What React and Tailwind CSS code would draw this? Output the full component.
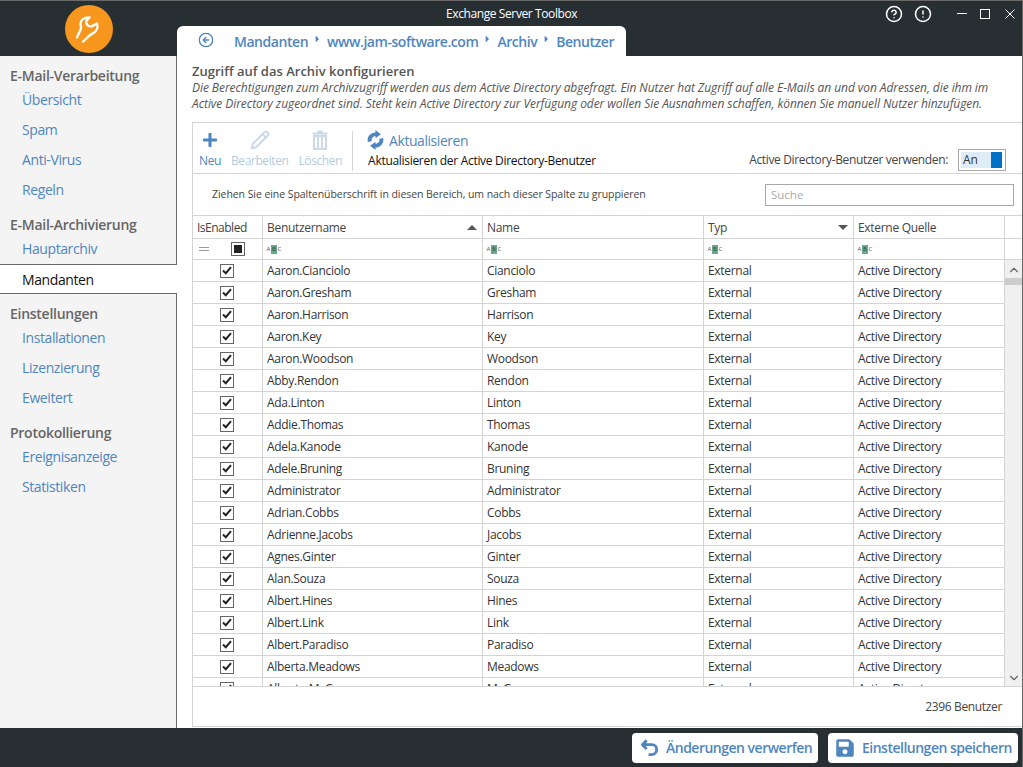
import React from "react";
import { CircleArrowLeft, CircleHelp, CircleAlert, ChevronUp, ChevronDown, Pencil } from "lucide-react";
import { FaSave, FaPlus, FaCaretRight } from "react-icons/fa";

const names = [
  ["Aaron.Cianciolo", "Cianciolo"],
  ["Aaron.Gresham", "Gresham"],
  ["Aaron.Harrison", "Harrison"],
  ["Aaron.Key", "Key"],
  ["Aaron.Woodson", "Woodson"],
  ["Abby.Rendon", "Rendon"],
  ["Ada.Linton", "Linton"],
  ["Addie.Thomas", "Thomas"],
  ["Adela.Kanode", "Kanode"],
  ["Adele.Bruning", "Bruning"],
  ["Administrator", "Administrator"],
  ["Adrian.Cobbs", "Cobbs"],
  ["Adrienne.Jacobs", "Jacobs"],
  ["Agnes.Ginter", "Ginter"],
  ["Alan.Souza", "Souza"],
  ["Albert.Hines", "Hines"],
  ["Albert.Link", "Link"],
  ["Albert.Paradiso", "Paradiso"],
  ["Alberta.Meadows", "Meadows"],
  ["Alberto.McGee", "McGee"],
];

const SideHeading = ({ children, className = "" }) => (
  <div className={`h-[18px] pl-[10px] pb-[2px] flex items-center text-[14px] font-semibold text-[#666] tracking-[-0.27px] ${className}`}>{children}</div>
);

const SideItem = ({ children }) => (
  <div className="h-[30px] pl-[22px] pb-[2px] flex items-center text-[14px] text-[#4f86c0] tracking-[-0.4px]">{children}</div>
);

const AbcIcon = () => (
  <span className="flex items-center h-[10px] text-[6px] leading-none text-[#555]">
    <span className="w-[5px] text-center">A</span>
    <span className="w-[6px] h-[9px] bg-[#6aa88e] text-[#1f4a3a] text-center leading-[9px]">B</span>
    <span className="w-[5px] text-center">C</span>
  </span>
);

const CheckBox = () => (
  <span className="w-[14px] h-[14px] mr-[1px] border border-[#666] bg-white flex items-center justify-center">
    <svg width="10" height="9" viewBox="0 0 10 9">
      <path d="M1 4.5 L3.8 7.2 L9 1.2" fill="none" stroke="#222" strokeWidth="2" />
    </svg>
  </span>
);

const Crumb = ({ children }) => <span className="text-[14px] font-semibold text-[#4f86c0] tracking-[-0.45px]">{children}</span>;
const Sep = () => <FaCaretRight className="w-[9px] h-[10px] text-[#4f86c0] mx-[5px] mb-[4px]" />;

const ToolButton = ({ icon, label, muted, className = "" }) => (
  <div className={`flex flex-col items-center ${className}`}>
    <div className="h-[24px] flex items-center">{icon}</div>
    <span className={`text-[12px] leading-[18px] tracking-[-0.4px] ${muted ? "text-[#b3cbe2]" : "text-[#4f86c0]"}`}>{label}</span>
  </div>
);

const Row = ({ user, name }) => (
  <div className="h-[22px] flex shrink-0 border-b border-[#d4d4d4] text-[12px] text-[#333] tracking-[-0.3px]">
    <div className="w-[70px] flex items-center justify-center border-r border-[#d4d4d4]"><CheckBox /></div>
    <div className="w-[220px] pl-[4px] flex items-center border-r border-[#d4d4d4]">{user}</div>
    <div className="w-[221px] pl-[4px] flex items-center border-r border-[#d4d4d4]">{name}</div>
    <div className="w-[150px] pl-[4px] flex items-center border-r border-[#d4d4d4]">External</div>
    <div className="w-[151px] pl-[4px] flex items-center border-r border-[#d4d4d4]">Active Directory</div>
  </div>
);

export default function App() {
  return (
    <div className="w-[1023px] h-[767px] flex flex-col overflow-hidden bg-white border-t border-r border-[#6a6a6a]" style={{ fontFamily: '"Open Sans", "Noto Sans", sans-serif' }}>
      {/* Titelleiste */}
      <header className="h-[55px] shrink-0 flex bg-[#272f32]">
        <div className="w-[177px] shrink-0 flex justify-center pt-[4px]">
          <div className="w-[48px] h-[48px] rounded-full bg-[#f7971d]">
            <svg width="48" height="48" viewBox="12 8 144 144">
              <path d="M48 105 C52 92 62 84 60 72 C56 62 60 52 72 47 L86 45 L76 56 C74 66 82 74 92 72 L108 64 C112 76 106 88 94 94 C84 98 78 108 66 118" fill="none" stroke="#fff" strokeWidth="7" strokeLinecap="round" strokeLinejoin="round" />
            </svg>
          </div>
        </div>
        <div className="flex-1 flex flex-col">
          <div className="h-[25px] flex items-center pl-[269px] text-white text-[12px] tracking-[-0.4px]">
            <span>Exchange Server Toolbox</span>
            <div className="ml-auto flex items-center text-white">
              <CircleHelp className="w-[18px] h-[18px]" strokeWidth={2} />
              <CircleAlert className="w-[18px] h-[18px] ml-[11px]" strokeWidth={2} />
              <span className="w-[10px] h-[1.5px] bg-white ml-[25px]" />
              <span className="w-[10px] h-[10px] border border-white ml-[13px]" />
              <svg width="10" height="10" viewBox="0 0 10 10" className="ml-[15px] mr-[7px]">
                <path d="M0.5 0.5 L9.5 9.5 M9.5 0.5 L0.5 9.5" stroke="#fff" strokeWidth="1" />
              </svg>
            </div>
          </div>
          <div className="h-[30px] w-[449px] bg-white rounded-t-[6px] flex items-center pl-[21px]">
            <CircleArrowLeft className="w-[16px] h-[16px] text-[#4f86c0] mb-[2px]" />
            <div className="flex items-center ml-[20px]">
              <Crumb>Mandanten</Crumb>
              <Sep />
              <Crumb>www.jam-software.com</Crumb>
              <Sep />
              <Crumb>Archiv</Crumb>
              <Sep />
              <Crumb>Benutzer</Crumb>
            </div>
          </div>
        </div>
      </header>

      <div className="flex-1 flex min-h-0">
        {/* Seitenleiste */}
        <aside className="w-[177px] shrink-0 flex flex-col pt-[11px] bg-[#f4f4f4] border-r border-[#6a6a6a]">
          <SideHeading>E-Mail-Verarbeitung</SideHeading>
          <SideItem>Übersicht</SideItem>
          <SideItem>Spam</SideItem>
          <SideItem>Anti-Virus</SideItem>
          <SideItem>Regeln</SideItem>
          <SideHeading className="mt-[11px]">E-Mail-Archivierung</SideHeading>
          <SideItem>Hauptarchiv</SideItem>
          <div className="h-[30px] w-[177px] pl-[22px] flex items-center text-[14px] text-[#111] bg-white border-y border-[#6a6a6a] tracking-[-0.4px]">Mandanten</div>
          <SideHeading className="mt-[11px]">Einstellungen</SideHeading>
          <SideItem>Installationen</SideItem>
          <SideItem>Lizenzierung</SideItem>
          <SideItem>Eweitert</SideItem>
          <SideHeading className="mt-[11px]">Protokollierung</SideHeading>
          <SideItem>Ereignisanzeige</SideItem>
          <SideItem>Statistiken</SideItem>
        </aside>

        {/* Inhalt */}
        <main className="flex-1 min-w-0 flex flex-col pl-[15px] pt-[7px] pb-[1px]">
          <h1 className="text-[13px] leading-[17px] font-semibold text-[#555]">Zugriff auf das Archiv konfigurieren</h1>
          <p className="text-[12px] leading-[16px] italic text-[#555] whitespace-nowrap tracking-[-0.07px]">
            Die Berechtigungen zum Archivzugriff werden aus dem Active Directory abgefragt. Ein Nutzer hat Zugriff auf alle E-Mails an und von Adressen, die ihm im
            <br />
            Active Directory zugeordnet sind. Steht kein Active Directory zur Verfügung oder wollen Sie Ausnahmen schaffen, können Sie manuell Nutzer hinzufügen.
          </p>

          <div className="mt-[10px] flex-1 min-h-0 flex flex-col border border-[#d4d4d4] border-r-0">
            {/* Werkzeugleiste */}
            <div className="h-[51px] shrink-0 flex items-start border-b border-[#d4d4d4] pl-[6px] pt-[5px]">
              <ToolButton icon={<FaPlus className="w-[16px] h-[16px] text-[#4f86c0]" />} label="Neu" />
              <ToolButton className="ml-[10px]" muted icon={<Pencil className="w-[20px] h-[20px] text-[#c9d9ea]" strokeWidth={2.4} />} label="Bearbeiten" />
              <ToolButton className="ml-[10px]" muted icon={
                <svg width="16" height="20" viewBox="0 0 16 20">
                  <path d="M5.5 1.5 H10.5 M0.5 3.5 H15.5" fill="none" stroke="#c9d9ea" strokeWidth="2" />
                  <path d="M2 6 H14 V19 H2 Z" fill="none" stroke="#c9d9ea" strokeWidth="2" />
                  <path d="M6 7 V18 M10 7 V18" fill="none" stroke="#c9d9ea" strokeWidth="2" />
                </svg>
              } label="Löschen" />
              <div className="w-px h-[40px] bg-[#d4d4d4] ml-[10px] mt-[3px]" />
              <div className="ml-[15px] flex flex-col">
                <div className="h-[24px] flex items-center">
                  <svg width="17" height="20" viewBox="0 0 20 24" className="-ml-[1px]">
                    <path d="M3 14 C2 8.5 6 5 11 5 M17 10 C18 15.5 14 19 9 19" fill="none" stroke="#4f86c0" strokeWidth="4.6" />
                    <path d="M10 0 L16.5 5 L10 10 Z M10 14 L3.5 19 L10 24 Z" fill="#4f86c0" />
                  </svg>
                  <span className="ml-[5px] text-[14px] text-[#4f86c0] tracking-[-0.45px]">Aktualisieren</span>
                </div>
                <span className="text-[12px] leading-[18px] text-[#111] tracking-[-0.3px]">Aktualisieren der Active Directory-Benutzer</span>
              </div>
              <div className="ml-auto flex items-center mt-[21px] mr-[16px]">
                <span className="text-[12px] text-[#444] tracking-[-0.35px]">Active Directory-Benutzer verwenden:</span>
                <div className="ml-[10px] w-[48px] h-[22px] border border-[#a8a8a8] p-[2px] flex bg-white">
                  <div className="flex-1 bg-[#deecf7] text-[12px] text-[#333] pl-[2px] leading-[16px]">An</div>
                  <div className="w-[11px] bg-[#0072c6] mr-[1px]" />
                </div>
              </div>
            </div>

            {/* Gruppierung */}
            <div className="h-[42px] shrink-0 flex items-center pl-[19px] pr-[8px] border-b border-[#d4d4d4]">
              <span className="text-[10.5px] text-[#444] tracking-[-0.06px]">Ziehen Sie eine Spaltenüberschrift in diesen Bereich, um nach dieser Spalte zu gruppieren</span>
              <div className="ml-auto w-[249px] h-[22px] border border-[#a8a8a8] pl-[5px] pt-[1px] flex items-center text-[11.5px] text-[#aaa]">Suche</div>
            </div>

            {/* Kopfzeile */}
            <div className="h-[23px] shrink-0 flex border-b border-[#d4d4d4] text-[12px] text-[#444] tracking-[-0.3px]">
              <div className="w-[70px] pl-[4px] pt-[1px] flex items-center border-r border-[#d4d4d4] tracking-[-0.5px]">IsEnabled</div>
              <div className="w-[220px] px-[4px] pt-[1px] flex items-center justify-between border-r border-[#d4d4d4]">
                Benutzername
                <span className="w-0 h-0 border-x-[5px] border-x-transparent border-b-[5px] border-b-[#555] mr-[1px]" />
              </div>
              <div className="w-[221px] pl-[4px] pt-[1px] flex items-center border-r border-[#d4d4d4]">Name</div>
              <div className="w-[150px] px-[4px] pt-[1px] flex items-center justify-between border-r border-[#d4d4d4]">
                Typ
                <span className="w-0 h-0 border-x-[5px] border-x-transparent border-t-[5px] border-t-[#555] mr-[1px]" />
              </div>
              <div className="w-[151px] pl-[4px] pt-[1px] flex items-center border-r border-[#d4d4d4]">Externe Quelle</div>
            </div>

            {/* Filterzeile */}
            <div className="h-[21px] shrink-0 flex border-b border-[#d4d4d4]">
              <div className="w-[70px] flex items-center border-r border-[#d4d4d4] pl-[6px]">
                <span className="w-[10px] h-[4px] border-y border-[#999]" />
                <span className="ml-[22px] w-[14px] h-[14px] border border-[#666] flex items-center justify-center">
                  <span className="w-[8px] h-[8px] bg-[#222]" />
                </span>
              </div>
              <div className="w-[220px] pl-[3px] flex items-center border-r border-[#d4d4d4]"><AbcIcon /></div>
              <div className="w-[221px] pl-[3px] flex items-center border-r border-[#d4d4d4]"><AbcIcon /></div>
              <div className="w-[150px] pl-[3px] flex items-center border-r border-[#d4d4d4]"><AbcIcon /></div>
              <div className="w-[151px] pl-[3px] flex items-center border-r border-[#d4d4d4]"><AbcIcon /></div>
            </div>

            {/* Zeilen */}
            <div className="h-[427px] shrink-0 flex overflow-hidden border-b border-[#d4d4d4]">
              <div className="w-[812px] shrink-0 flex flex-col">
                {names.map(([user, name]) => (
                  <Row key={user} user={user} name={name} />
                ))}
              </div>
              <div className="flex-1 flex flex-col items-center bg-[#f0f0f0]">
                <ChevronUp className="w-[14px] h-[14px] mt-[3px] text-[#666]" />
                <div className="w-full h-[7px] bg-[#cdcdcd] mt-[1px]" />
                <ChevronDown className="w-[14px] h-[14px] mt-auto mb-[1px] text-[#666]" />
              </div>
            </div>

            {/* Fusszeile */}
            <div className="flex-1 flex items-center justify-end pr-[20px] text-[12px] text-[#444] tracking-[-0.35px]">2396 Benutzer</div>
          </div>
        </main>
      </div>

      {/* Aktionsleiste */}
      <footer className="h-[39px] shrink-0 bg-[#272f32] flex items-center justify-end pr-[4px] gap-[10px]">
        <button className="w-[186px] h-[30px] bg-white rounded-[4px] flex items-center pl-[8px] gap-[7px] text-[14px] font-semibold text-[#4f86c0] tracking-[-0.5px]">
          <svg width="19" height="19" viewBox="0 0 20 20">
            <path d="M7 2.5 L2.5 7 L7 11.5 M3 7 H12.5 C15.5 7 17.5 9 17.5 12 C17.5 15 15.5 17.5 12 17.5 H9" fill="none" stroke="#4f86c0" strokeWidth="3" strokeLinejoin="round" />
          </svg>
          Änderungen verwerfen
        </button>
        <button className="w-[190px] h-[30px] bg-white rounded-[4px] flex items-center pl-[7px] gap-[7px] text-[14px] font-semibold text-[#4f86c0] tracking-[-0.5px]">
          <FaSave className="w-[20px] h-[20px]" />
          Einstellungen speichern
        </button>
      </footer>
    </div>
  );
}
